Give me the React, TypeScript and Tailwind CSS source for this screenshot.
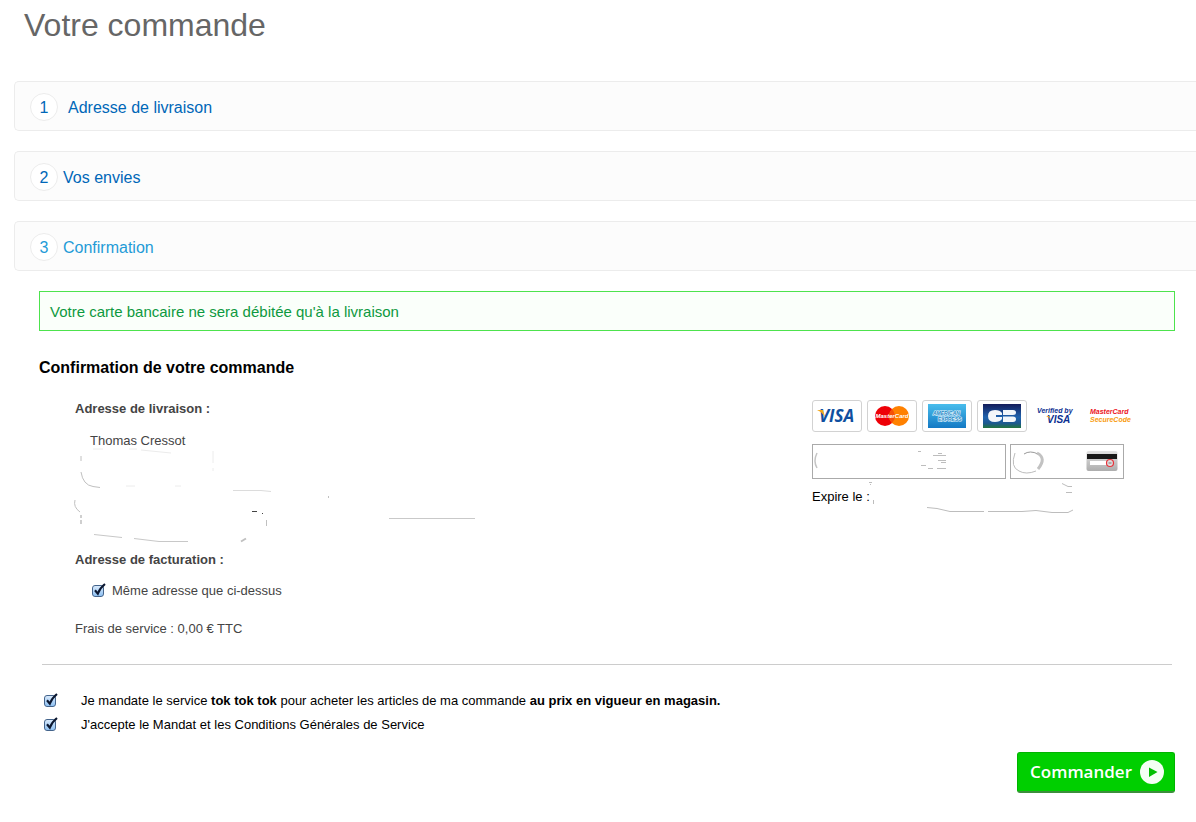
import type { ReactNode } from 'react';

const steps = [
    { number: 1, title: 'Adresse de livraison', link: 'text-[#0067b8] gap-2.5' },
    { number: 2, title: 'Vos envies', link: 'text-[#0067b8] gap-[5px]' },
    { number: 3, title: 'Confirmation', link: 'text-[#1f9bd7] gap-[5px]' },
];

const CheckBox = ({ id }: { id: string }) => (
    <span className="relative block h-3 w-3 shrink-0">
        <input
            id={id}
            type="checkbox"
            defaultChecked
            className="peer block h-3 w-3 appearance-none rounded-[3px] border border-[#44648c] bg-linear-to-b from-[#d8e9fb] to-[#8fc1f2]"
        />
        <svg viewBox="0 0 14 14" className="pointer-events-none absolute -top-0.5 left-0 hidden h-3.5 w-3.5 peer-checked:block" aria-hidden="true">
            <path d="M3 7.2 L5.8 10.6 Q8 5 13 1" fill="none" stroke="#0b1730" strokeWidth="2.2" />
        </svg>
    </span>
);

const CardFrame = ({ children }: { children: ReactNode }) => (
    <li className="flex h-8 w-[50px] items-center justify-center rounded-[3px] border border-[#d2d2d2] bg-white">{children}</li>
);

const PaymentLogos = () => (
    <ul className="flex items-center gap-[5px]">
        <CardFrame>
            <svg width="42" height="26" viewBox="0 0 42 26" role="img" aria-label="Visa">
                <text x="3" y="19" fontFamily="'Open Sans'" fontSize="17" fontWeight="700" fontStyle="italic" fill="#0f4fa0">VISA</text>
                <path d="M1 7 H7 L9 14 Q6 9 1 7 Z" fill="#f2a81d" />
            </svg>
        </CardFrame>
        <CardFrame>
            <svg width="36" height="22" viewBox="0 0 36 22" role="img" aria-label="MasterCard">
                <circle cx="11" cy="11" r="10" fill="#ee0007" />
                <circle cx="25" cy="11" r="10" fill="#ff8100" />
                <path d="M18 4 A10 10 0 0 1 18 18 A10 10 0 0 1 18 4 Z" fill="#f5500a" />
                <text x="18" y="13" textAnchor="middle" fontFamily="'Liberation Sans'" fontSize="6" fontWeight="700" fontStyle="italic" fill="#fff">MasterCard</text>
            </svg>
        </CardFrame>
        <CardFrame>
            <svg width="38" height="24" viewBox="0 0 38 24" role="img" aria-label="American Express">
                <defs>
                    <linearGradient id="amex" x1="0" y1="0" x2="0" y2="1">
                        <stop offset="0" stopColor="#49bdec" />
                        <stop offset="1" stopColor="#1479c4" />
                    </linearGradient>
                </defs>
                <rect width="38" height="24" fill="url(#amex)" />
                <g fontFamily="'Liberation Sans'" fontSize="5" fontWeight="700" fill="#2187c5" stroke="#e4f5fd" strokeWidth="1.2" paintOrder="stroke">
                    <text x="5" y="11" fontStyle="italic">AMERICAN</text>
                    <text x="10" y="17">EXPRESS</text>
                </g>
            </svg>
        </CardFrame>
        <CardFrame>
            <svg width="38" height="24" viewBox="0 0 38 24" role="img" aria-label="Carte Bleue">
                <defs>
                    <linearGradient id="cb" x1="0" y1="0" x2="0" y2="1">
                        <stop offset="0" stopColor="#141d5b" />
                        <stop offset="0.55" stopColor="#1f62ad" />
                        <stop offset="0.8" stopColor="#1c5890" />
                        <stop offset="1" stopColor="#23743c" />
                    </linearGradient>
                </defs>
                <rect width="38" height="24" fill="url(#cb)" />
                <path d="M19 11 V9 Q17 6 12 6 Q5 6 5 12 Q5 18 12 18 Q17 18 19 15 V13 H13 V11 Z" fill="#f3f6fa" />
                <path d="M20 6 H30 Q33 6 33 8.500 Q33 11 30 11 H20 Z M20 12.500 H30 Q33 12.500 33 15 Q33 18 30 18 H20 Z" fill="#f3f6fa" />
            </svg>
        </CardFrame>
        <li className="ml-1 w-[42px]">
            <svg width="42" height="24" viewBox="0 0 42 24" role="img" aria-label="Verified by Visa">
                <g fontFamily="'Liberation Sans'" fontStyle="italic" fontWeight="700" fill="#0b2f91">
                    <text x="1" y="9" fontSize="7">Verified by</text>
                    <text x="11" y="19" fontSize="10">VISA</text>
                </g>
                <path d="M10 12 H13 L15 16 Q13 13 10 12 Z" fill="#f2a81d" />
            </svg>
        </li>
        <li className="ml-1.5 w-[42px]">
            <svg width="42" height="24" viewBox="0 0 42 24" role="img" aria-label="MasterCard SecureCode">
                <g fontFamily="'Liberation Sans'" fontStyle="italic" fontWeight="700" fontSize="7">
                    <text x="1" y="10" fill="#ec1320">MasterCard</text>
                    <text x="1" y="18" fill="#f99b0c">SecureCode</text>
                </g>
            </svg>
        </li>
    </ul>
);

const SecurityCodeIcon = () => (
    <svg width="32" height="21" viewBox="0 0 32 21" className="pointer-events-none absolute top-[7px] right-[6px]" aria-hidden="true">
        <defs>
            <linearGradient id="cvv" x1="0" y1="0" x2="0" y2="1">
                <stop offset="0" stopColor="#e3e3e3" />
                <stop offset="1" stopColor="#adadad" />
            </linearGradient>
        </defs>
        <rect width="31" height="20" x="0.5" rx="2" fill="url(#cvv)" />
        <rect width="30" height="5" x="1" y="3" fill="#191919" />
        <rect width="19" height="4" x="4" y="10" fill="#fff" />
        <circle cx="24" cy="12" r="3.500" fill="#ddd" stroke="#e8323a" strokeWidth="1.2" />
        <path d="M22.500 12 H25.500" stroke="#777" />
    </svg>
);

/* Pen marks left around the erased address lines */
const AddressMarks = () => (
    <svg width="401" height="93" viewBox="0 3 401 93" className="block overflow-visible" fill="none" stroke="#c0c0c0" aria-hidden="true">
        <path d="M18 1 H28 M54 1 H62 M66 2 L96 5 M138 3 V15 M138 20 V23 M51 38 H60 M100 38 H106" stroke="#ececec" />
        <path d="M6 8 V13 M6 24 Q8 37 18 38.500 L25 39.500" />
        <path d="M0 52 Q-2 59 5 64" />
        <path d="M6 67 V70 M6 72 V76" strokeWidth="2" stroke="#cfcfcf" />
        <path d="M158 42.500 H186 L196 43.500" stroke="#dcdcdc" />
        <path d="M19 86.500 L47 89.500 M59 90.500 L84 93.500 H113" stroke="#c8c8c8" />
        <path d="M166 93.500 L171 90.500" strokeWidth="2" />
        <path d="M177 63.500 H182 M187 65.500 H188" stroke="#444" />
        <path d="M191.500 72 V78 M253.500 48 V50" />
        <path d="M314 70.500 H400" stroke="#c9c9c9" />
    </svg>
);

/* Same thing over the card number, its code and the expiry date */
const CardMarks = () => (
    <svg width="312" height="72" viewBox="0 0 312 72" className="pointer-events-none absolute top-0 left-0" fill="none" stroke="#bdbdbd" aria-hidden="true">
        <path d="M5 9 Q1 17 5 24" stroke="#c4c4c4" strokeWidth="1.500" />
        <path d="M106 7.500 H109 M109 21.500 H114 M121 11.500 H134 M126 9.500 H130 M126 16.500 H134 M129 18.500 H134 M116 24.500 H121 M125 24.500 H134" />
        <path d="M203 9 Q198 23 207 27 Q214 31 224 27" />
        <path d="M212 10 Q218 6 226 10" stroke="#999" />
        <path d="M225 9 Q235 14 226 25" stroke="#c2c2c2" strokeWidth="3" />
        <path d="M57 38.500 H60 M58 40.500 H59 M61.500 56 V60 M250 39.500 L256 42.500 H260 M254 48.500 H260" />
        <path d="M115 63.500 L125 64.500 L138 67.500 H172 M176 67.500 H210 L224 66.500 L240 68.500 H256 L261 66" />
    </svg>
);

export default function App() {
    return (
        <main className="overflow-x-hidden bg-white pb-7 font-['Liberation_Sans',Arial,sans-serif] text-[13px] leading-5 text-[#444]">
            <h1 className="px-6 pt-1 text-[32px] leading-[42px] text-[#666]">Votre commande</h1>

            <ol className="mt-[35px] ml-3.5 flex flex-col gap-5">
                {steps.map((step) => (
                    <li key={step.number} className="flex h-[50px] items-center rounded-l-[5px] border border-r-0 border-[#ececec] bg-[#fcfcfc] px-[15px] pt-0.5">
                        <a href={`#etape-${step.number}`} className={`flex items-center text-base ${step.link}`}>
                            <span className="flex h-7 w-7 items-center justify-center rounded-full border border-[#ececec] bg-white pt-0.5">{step.number}</span>
                            <span className="pt-0.5">{step.title}</span>
                        </a>
                    </li>
                ))}
            </ol>

            <form id="etape-3" className="mt-5 mr-[21px] ml-[39px]" onSubmit={(e) => e.preventDefault()}>
                <p className="border border-[#4de34d] bg-[#fafffa] px-2.5 pt-2.5 pb-2 text-[15px] text-[#0d9940]">
                    Votre carte bancaire ne sera débitée qu'à la livraison
                </p>

                <h2 className="mt-[27px] text-base leading-5 font-bold text-black">Confirmation de votre commande</h2>

                <div className="mt-[21px] flex justify-between pl-9">
                    <section>
                        <h3 className="font-bold">Adresse de livraison :</h3>
                        <p className="mt-3 pl-[15px]">Thomas Cressot</p>
                        <AddressMarks />
                        <h3 className="mt-1.5 font-bold">Adresse de facturation :</h3>
                        <div className="mt-[11px] flex items-center gap-2 pl-[17px]">
                            <CheckBox id="same-address" />
                            <label htmlFor="same-address">Même adresse que ci-dessus</label>
                        </div>
                        <p className="mt-[18px]">Frais de service : 0,00 € TTC</p>
                    </section>

                    <section className="w-[363px] shrink-0 pt-px">
                        <PaymentLogos />
                        <div className="relative mt-3">
                            <div className="flex gap-1">
                                <input aria-label="Numéro de carte" className="h-[35px] w-[194px] border border-[#aaa] px-2" />
                                <div className="relative">
                                    <input aria-label="Cryptogramme" className="h-[35px] w-[114px] border border-[#aaa] px-2" />
                                    <SecurityCodeIcon />
                                </div>
                            </div>
                            <p className="mt-2 text-black">Expire le :</p>
                            <CardMarks />
                        </div>
                    </section>
                </div>

                <hr className="mx-[3px] mt-[25px] border-[#ccc]" />

                <div className="mt-[26px] flex flex-col gap-1 pl-[5px] text-black">
                    <div className="flex items-center gap-[25px]">
                        <CheckBox id="mandate" />
                        <label htmlFor="mandate">
                            Je mandate le service <b>tok tok tok</b> pour acheter les articles de ma commande <b>au prix en vigueur en magasin.</b>
                        </label>
                    </div>
                    <div className="flex items-center gap-[25px]">
                        <CheckBox id="terms" />
                        <label htmlFor="terms">J'accepte le Mandat et les Conditions Générales de Service</label>
                    </div>
                </div>

                <div className="mt-[17px] flex justify-end">
                    <button type="submit" className="flex h-[41px] items-center gap-2 rounded-[3px] border border-b-2 border-[#00b400] border-b-[#3c8f3c] bg-[#00cf00] pr-2.5 pl-3 font-['Open_Sans',sans-serif] text-[17px] font-semibold text-white">
                        Commander
                        <svg width="24" height="24" viewBox="0 0 24 24" aria-hidden="true">
                            <circle cx="12" cy="12" r="12" fill="#f4fff4" />
                            <path d="M9 7.500 L17.500 12 L9 17 Z" fill="#00bf00" />
                        </svg>
                    </button>
                </div>
            </form>
        </main>
    );
}
